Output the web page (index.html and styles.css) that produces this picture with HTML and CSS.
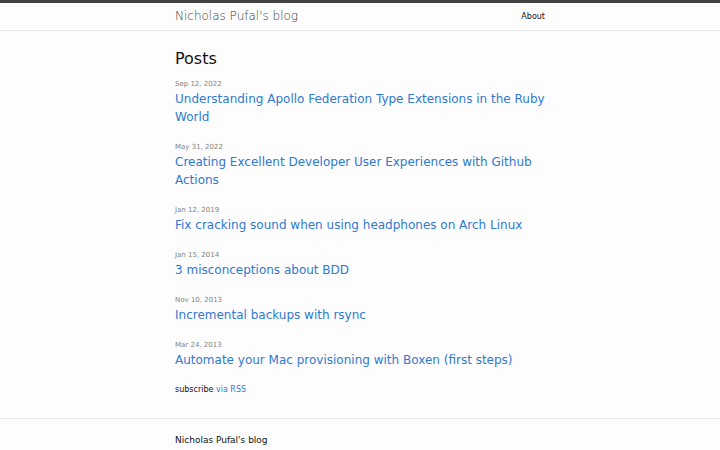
FILE: index.html
```html
<!DOCTYPE html>
<html lang="en">

<head>
    <meta charset="UTF-8">
    <meta name="viewport" content="width=device-width, initial-scale=1.0">
    <title>Nicholas Pufal's blog</title>

    <link rel="stylesheet" href="styles.css">
</head>

<body>

    <header class="site-header">
        <div class="wrapper header-row">
            <a class="site-title" href="#">Nicholas Pufal's blog</a>
            <nav class="site-nav">
                <a class="page-link" href="#">About</a>
            </nav>
        </div>
    </header>

    <main class="page-content">
        <div class="wrapper">
            <h2 class="post-list-heading">Posts</h2>
            <ul class="post-list">
                <li>
                    <span class="post-meta">Sep 12, 2022</span>
                    <a class="post-link" href="#">Understanding Apollo Federation Type Extensions in the Ruby World</a>
                </li>
                <li>
                    <span class="post-meta">May 31, 2022</span>
                    <a class="post-link" href="#">Creating Excellent Developer User Experiences with Github Actions</a>
                </li>
                <li>
                    <span class="post-meta">Jan 12, 2019</span>
                    <a class="post-link" href="#">Fix cracking sound when using headphones on Arch Linux</a>
                </li>
                <li>
                    <span class="post-meta">Jan 15, 2014</span>
                    <a class="post-link" href="#">3 misconceptions about BDD</a>
                </li>
                <li>
                    <span class="post-meta">Nov 10, 2013</span>
                    <a class="post-link" href="#">Incremental backups with rsync</a>
                </li>
                <li>
                    <span class="post-meta">Mar 24, 2013</span>
                    <a class="post-link" href="#">Automate your Mac provisioning with Boxen (first steps)</a>
                </li>
            </ul>
            <p class="rss-subscribe">subscribe <a href="#">via RSS</a></p>
        </div>
    </main>

    <footer class="site-footer">
        <div class="wrapper">
            <h2 class="footer-heading">Nicholas Pufal's blog</h2>
        </div>
    </footer>

</body>

</html>
```

FILE: styles.css
```css
body {
    margin: 0;
    background-color: #fdfdfd;
    color: #111;
    font-family: "DejaVu Sans", sans-serif;
}

a {
    color: #2f79cf;
    text-decoration: none;
}

.wrapper {
    width: 370px;
    margin: 0 auto;
}

.site-header {
    border-top: 3px solid #424242;
    border-bottom: 1px solid #e8e8e8;
}

.header-row {
    display: flex;
    justify-content: space-between;
    align-items: center;
    height: 27px;
}

.site-title {
    font-size: 12px;
    font-weight: 300;
    line-height: 27px;
    color: #424242;
}

.site-nav {
    font-size: 8px;
    line-height: 12px;
}

.page-link {
    color: #111;
}

.page-content {
    padding: 18px 0 22px;
}

.post-list-heading {
    margin: 0 0 9px;
    font-size: 16px;
    font-weight: 400;
    line-height: 20px;
}

.post-list {
    margin: 0;
    padding: 0;
    list-style: none;
}

.post-list li {
    margin-bottom: 15px;
}

.post-meta {
    display: block;
    font-size: 7px;
    line-height: 12px;
    color: #828282;
}

.post-link {
    display: block;
    font-size: 12px;
    line-height: 18px;
}

.rss-subscribe {
    margin: 0;
    font-size: 8px;
    line-height: 12px;
}

.site-footer {
    border-top: 1px solid #e8e8e8;
    padding: 15px 0;
}

.footer-heading {
    margin: 0;
    font-size: 9px;
    font-weight: 400;
    line-height: 12px;
}
```
